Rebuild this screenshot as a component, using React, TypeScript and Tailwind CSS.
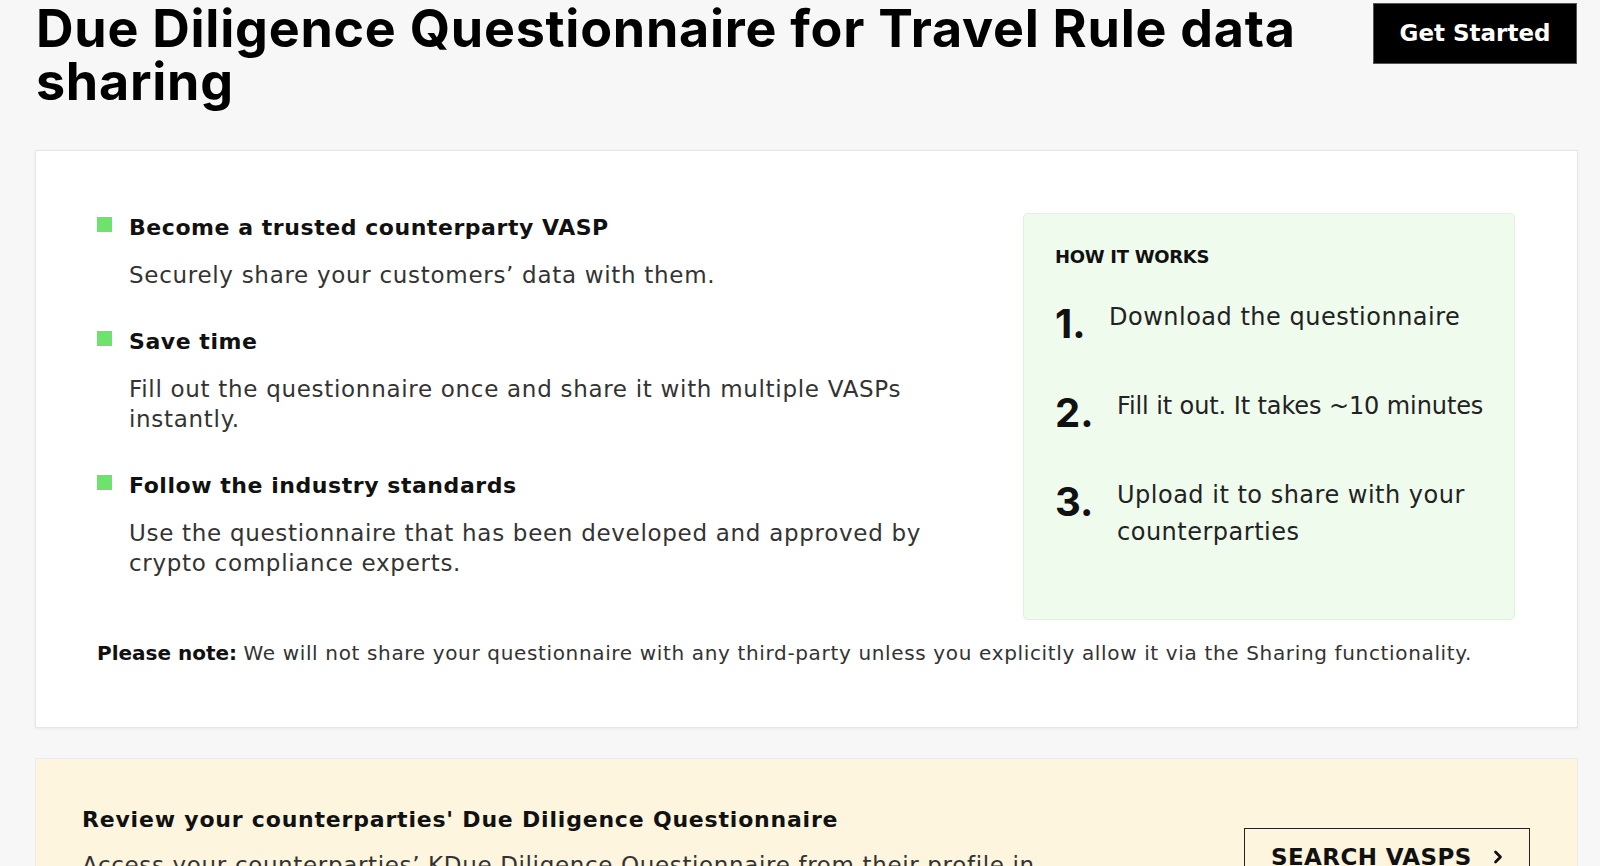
import React from "react";
import { ChevronRight } from "lucide-react";

const DV = { fontFamily: '"DejaVu Sans", "Liberation Sans", sans-serif' };
const IN = { fontFamily: 'Inter, "Liberation Sans", sans-serif' };

function Benefit({ title, children }: { title: string; children: React.ReactNode }) {
  return (
    <div className="flex gap-[17px]">
      <div className="mt-[4px] h-[15px] w-[15px] shrink-0 bg-[#6de36d]" />
      <div className="flex-1">
        <div className="text-[22px] font-bold leading-[30px] tracking-[0.55px] text-[#111]">{title}</div>
        <div className="mt-[17px] text-[23px] leading-[30px] tracking-[0.7px] text-[#333]">{children}</div>
      </div>
    </div>
  );
}

function Step({ n, children, numW }: { n: string; children: React.ReactNode; numW: string }) {
  return (
    <div className="flex items-start">
      <div
        className={`mt-[5px] shrink-0 text-[40px] font-bold leading-[40px] text-[#111] ${numW}`}
        style={IN}
      >
        {n}
      </div>
      <div className="text-[24px] leading-[37px] tracking-[0.5px] text-[#222]">{children}</div>
    </div>
  );
}

export default function App() {
  return (
    <div className="min-h-[866px] w-full overflow-hidden bg-[#f7f7f7] pl-[35px] pr-[22px]" style={DV}>
      {/* Header */}
      <div className="flex items-start justify-between">
        <h1
          className="ml-[1px] w-[1300px] pt-[2px] text-[52px] font-bold leading-[53px] tracking-[0.75px] text-black"
          style={IN}
        >
          Due Diligence Questionnaire for Travel Rule data sharing
        </h1>
        <button className="mr-[1px] mt-[3px] flex h-[61px] w-[204px] items-center justify-center border border-[#555] bg-black text-[23px] font-bold text-white">
          Get Started
        </button>
      </div>

      {/* Main card */}
      <div className="mt-[42px] border border-[#e6e6e6] bg-white pb-[59px] pl-[61px] pr-[62px] pt-[62px] shadow-[0_1px_3px_rgba(0,0,0,0.06)]">
        <div className="flex items-start justify-between">
          <div className="flex w-[870px] flex-col gap-[37px]">
            <Benefit title="Become a trusted counterparty VASP">
              Securely share your customers’ data with them.
            </Benefit>
            <Benefit title="Save time">
              Fill out the questionnaire once and share it with multiple VASPs instantly.
            </Benefit>
            <Benefit title="Follow the industry standards">
              Use the questionnaire that has been developed and approved by crypto compliance experts.
            </Benefit>
          </div>

          <div className="h-[407px] w-[492px] rounded-[5px] border border-[#dcf5d8] bg-[#effbed] pl-[31px] pr-[6px] pt-[31px]">
            <div className="text-[18px] font-bold leading-[24px] tracking-[-0.3px] text-[#111]">HOW IT WORKS</div>
            <div className="mt-[30px] flex flex-col gap-[44px]">
              <Step n="1." numW="w-[54px]">Download the questionnaire</Step>
              <Step n="2." numW="w-[62px]">
                <span className="whitespace-nowrap tracking-[-0.1px]">Fill it out. It takes ~10 minutes</span>
              </Step>
              <Step n="3." numW="w-[62px]">
                Upload it to share with your
                <br />
                counterparties
              </Step>
            </div>
          </div>
        </div>

        <p className="mt-[18px] text-[20px] leading-[30px] text-[#333]">
          <span className="font-bold text-[#111]">Please note:</span>{" "}
          <span className="tracking-[0.65px]">
            We will not share your questionnaire with any third-party unless you explicitly allow it via the Sharing
            functionality.
          </span>
        </p>
      </div>

      {/* Review card */}
      <div className="mt-[30px] border border-[#ececec] bg-[#fdf5de] pb-[47px] pl-[46px] pr-[47px] pt-[46px]">
        <div className="flex items-start justify-between">
          <div className="w-[975px]">
            <div className="text-[22px] font-bold leading-[30px] tracking-[0.8px] text-[#111]">
              Review your counterparties' Due Diligence Questionnaire
            </div>
            <div className="mt-[15px] text-[23px] leading-[30px] tracking-[0.65px] text-[#333]">
              Access your counterparties’ KDue Diligence Questionnaire from their profile in the Notabene network.
            </div>
          </div>
          <button className="mt-[23px] flex h-[58px] w-[286px] items-center border-[1.5px] border-[#222] pl-[26px] text-[23px] font-bold uppercase tracking-[0.4px] text-[#111]">
            <span>SEARCH VASPS</span>
            <ChevronRight className="ml-[16px]" size={20} strokeWidth={3.2} />
          </button>
        </div>
      </div>
    </div>
  );
}
